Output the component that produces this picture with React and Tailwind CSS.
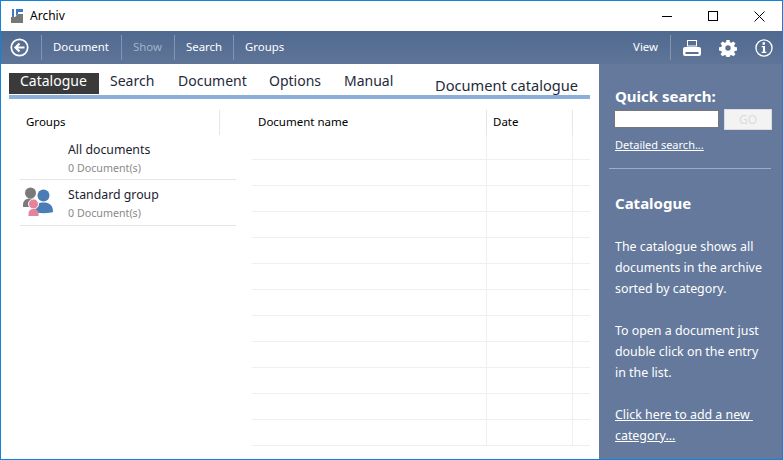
import { useState } from 'react';

const menu = [
  { label: 'Document', w: 'w-[80px]' },
  { label: 'Show', w: 'w-[53px]', muted: true },
  { label: 'Search', w: 'w-[59px]' },
  { label: 'Groups', w: 'w-[68px]' },
];
const tabs = [
  { label: 'Catalogue', w: 'w-[90px] pl-[11px] bg-[#3a3a3a] text-white' },
  { label: 'Search', w: 'w-[79px] pl-[11px]' },
  { label: 'Document', w: 'w-[91px]' },
  { label: 'Options', w: 'w-[75px]' },
  { label: 'Manual', w: '' },
];
const rows = Array.from({ length: 12 });

function GroupIcon() {
  return (
    <svg width="30" height="29" viewBox="0 0 30 29">
      <circle cx="7.500" cy="6" r="5.500" fill="#7a7a7a" />
      <path d="M0 18c0-4.500 3-6.500 7.500-6.500s8 2 8 6.500v2H0z" fill="#7a7a7a" />
      <circle cx="20.500" cy="8.500" r="6" fill="#4a7db5" />
      <path d="M11 25c0-7 3.500-9.500 9.500-9.500S30 18 30 25c-3 1.500-16 1.500-19 0z" fill="#4a7db5" />
      <circle cx="10.500" cy="17" r="5" fill="#e5829c" stroke="#fff" strokeWidth="1" />
      <path d="M5.500 29v-2.500c0-3 2-4.500 5-4.500s5 1.500 5 4.500V29z" fill="#e5829c" />
    </svg>
  );
}

export default function App() {
  const [query, setQuery] = useState('');

  return (
    <div className="w-[783px] h-[460px] flex flex-col border border-[#1183d8] bg-white overflow-hidden font-['Noto_Sans',sans-serif]">
      {/* title bar */}
      <div className="h-[30px] flex items-center shrink-0">
        <svg className="ml-[10px]" width="12" height="14" viewBox="0 0 12 14">
          <path d="M0 14V8h4l3-3h5v9z" fill="#777" />
          <path d="M1 0h2v8H1zM5 0h7v3H7v2L5 7z" fill="#3f79c4" />
        </svg>
        <span className="ml-[7px] text-[12px] text-black">Archiv</span>
        <div className="ml-auto flex items-center">
          <button className="w-[46px] h-[30px] flex items-center justify-center">
            <span className="block w-[10px] h-px bg-black" />
          </button>
          <button className="w-[46px] h-[30px] flex items-center justify-center">
            <span className="block w-[10px] h-[10px] border border-black" />
          </button>
          <button className="w-[46px] h-[30px] flex items-center justify-center">
            <svg width="11" height="11" viewBox="0 0 11 11" stroke="#000" strokeWidth="1">
              <path d="M0.500 0.500l10 10M10.500 0.500l-10 10" />
            </svg>
          </button>
        </div>
      </div>

      {/* toolbar */}
      <div className="h-[33px] shrink-0 flex items-center bg-gradient-to-b from-[#50698f] to-[#5f7598] text-white text-[11.4px]">
        <div className="w-[40px] flex justify-center pr-[3px]">
          <svg width="19" height="19" viewBox="0 0 19 19" fill="none" stroke="#fff">
            <circle cx="9.500" cy="9.500" r="8.200" strokeWidth="1.700" />
            <path d="M14.500 9.500H6M9.500 5.500l-4 4 4 4" strokeWidth="2.200" />
          </svg>
        </div>
        {menu.map((m) => (
          <div key={m.label} className={`${m.w} h-[25px] flex items-center pl-[11px] pb-[2px] border-l border-[#8195b3] ${m.muted ? 'text-[#a3b2c8]' : ''}`}>
            {m.label}
          </div>
        ))}
        <div className="ml-auto flex items-center">
          <span className="mr-[12px] pb-[2px]">View</span>
          <div className="h-[25px] border-l border-[#8195b3]" />
          <svg className="ml-[12px]" width="18" height="16" viewBox="0 0 18 16" fill="#fff">
            <path d="M4 0h10v6.500H4zM5 1v4.500h8V1z" fillRule="evenodd" />
            <path d="M2 7h14a2 2 0 0 1 2 2v5a2 2 0 0 1-2 2H2a2 2 0 0 1-2-2V9a2 2 0 0 1 2-2zM2.500 12v2h13v-2z" fillRule="evenodd" />
          </svg>
          <svg className="ml-[18px]" width="18" height="18" viewBox="0 0 18 18" fill="#fff">
            <path fillRule="evenodd" d="M7.300 0h3.400l.5 2.600 1.500.6 2.200-1.500 2.400 2.400-1.500 2.200.6 1.500 2.600.5v3.400l-2.600.5-.6 1.500 1.500 2.200-2.400 2.400-2.200-1.500-1.500.6-.5 2.600H7.300l-.5-2.600-1.500-.6-2.200 1.500L.7 15.900l1.500-2.200-.6-1.500L-1 11.700V8.300l2.600-.5.600-1.500L.7 4.100l2.400-2.400 2.200 1.500 1.500-.6zM9 6a3 3 0 1 0 0 6 3 3 0 0 0 0-6z" transform="translate(.9 .9) scale(.9)" />
          </svg>
          <svg className="ml-[18px] mr-[9px]" width="18" height="18" viewBox="0 0 19 19" fill="none">
            <circle cx="9.500" cy="9.500" r="8.500" stroke="#fff" strokeWidth="1.400" />
            <path d="M8 3.500h2.500v2.500H8zM7 7.500h3.600v6H12v1.300H7v-1.300h1.400V8.800H7z" fill="#fff" />
          </svg>
        </div>
      </div>

      <div className="flex-1 flex min-h-0">
        {/* main */}
        <div className="w-[598px] shrink-0 flex flex-col pt-[8px] pl-[8px] pr-[9px]">
          <div className="h-[22px] flex items-end justify-between">
            <div className="flex h-[21px] text-[14px] leading-[15px] text-[#1f2a3a]">
              {tabs.map((t) => (
                <div key={t.label} className={t.w}>{t.label}</div>
              ))}
            </div>
            <div className="text-[14.6px] leading-[20px] text-[#1f2a3a] pr-[12px] translate-y-[1px]">Document catalogue</div>
          </div>
          <div className="h-[4px] bg-[#8aafdb] mt-[1px]" />

          <div className="flex flex-1 mt-[11px]">
            <div className="w-[211px] shrink-0">
              <div className="h-[25px] flex items-center pl-[17px] pb-[2px] border-r border-[#e6e6e6] text-[11.5px] text-black">Groups</div>
              <div className="h-[45px] border-b border-[#e6e6e6] ml-[11px] w-[216px] pl-[48px] pt-[5px]">
                <div className="text-[12.3px] leading-[20px] text-[#1c1c30]">All documents</div>
                <div className="text-[10.7px] leading-[16px] text-[#8a8a8a]">0 Document(s)</div>
              </div>
              <div className="h-[46px] border-b border-[#e6e6e6] ml-[11px] w-[216px] flex items-center">
                <div className="w-[48px] pl-[3px] pb-[2px]"><GroupIcon /></div>
                <div>
                  <div className="text-[12.3px] leading-[20px] text-[#1c1c30]">Standard group</div>
                  <div className="text-[10.7px] leading-[16px] text-[#8a8a8a]">0 Document(s)</div>
                </div>
              </div>
            </div>

            <div className="ml-[32px] flex-1 flex flex-col">
              <div className="h-[25px] flex text-[11.5px] text-black">
                <div className="w-[235px] pl-[6px] pb-[2px] flex items-center border-r border-[#e6e6e6]">Document name</div>
                <div className="w-[86px] pl-[6px] pb-[2px] flex items-center border-r border-[#e6e6e6]">Date</div>
              </div>
              {rows.map((_, i) => (
                <div key={i} className={`flex border-b border-[#efefef] ${i === 0 ? 'h-[25px]' : 'h-[26px]'}`}>
                  <div className="w-[235px] border-r border-[#efefef]" />
                  <div className="w-[86px] border-r border-[#efefef]" />
                </div>
              ))}
            </div>
          </div>
        </div>

        {/* sidebar */}
        <div className="flex-1 bg-[#64799b] text-white px-[10px] pt-[20px]">
          <div className="pl-[6px]">
            <div className="text-[15px] leading-[24px] font-bold">Quick search:</div>
            <div className="flex items-start mt-[2px]">
              <input value={query} onChange={(e) => setQuery(e.target.value)} className="w-[105px] h-[18px] -ml-px bg-white border border-[#777] outline-none text-black text-[12px]" />
              <button className="ml-[5px] w-[48px] h-[21px] -mt-px bg-[#f3f3f3] border border-[#ddd] text-[12px] text-[#dcdcdc]">GO</button>
            </div>
            <div className="text-[11px] leading-[16px] underline mt-[7px]">Detailed search...</div>
          </div>
          <div className="h-px bg-[#9cadc6] mt-[15px] w-[162px]" />
          <div className="pl-[6px]">
            <div className="text-[15px] leading-[24px] font-bold mt-[22px]">Catalogue</div>
            <div className="text-[12.4px] leading-[21px] mt-[21px]">
              <p>The catalogue shows all<br />documents in the archive<br />sorted by category.</p>
              <p className="mt-[21px]">To open a document just<br />double click on the entry<br />in the list.</p>
              <p className="mt-[21px] underline">Click here to add a new&nbsp;<br />category...</p>
            </div>
          </div>
        </div>
      </div>
    </div>
  );
}
